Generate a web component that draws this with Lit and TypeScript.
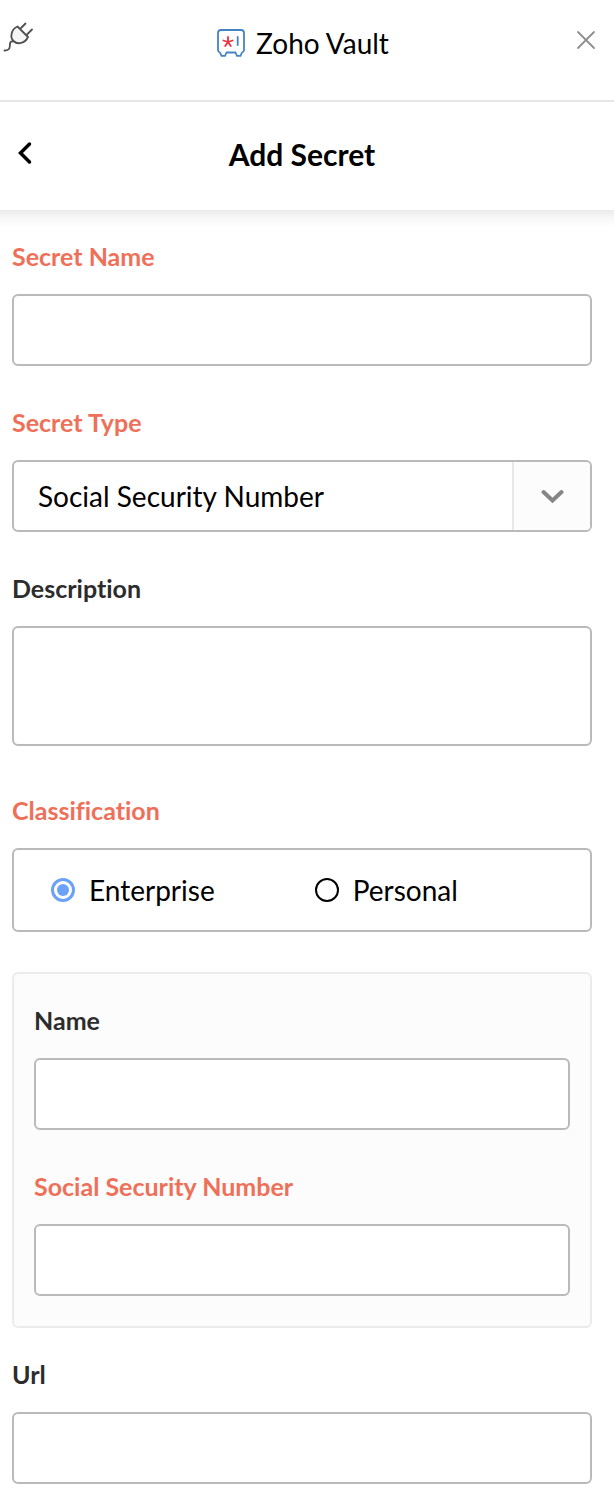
import { LitElement, html, css, svg } from "lit";
import { customElement, state } from "lit/decorators.js";

const plugIcon = svg`<svg width="34" height="34" viewBox="0 0 34 34" fill="none" stroke="#505050" stroke-width="1.800" stroke-linecap="round" stroke-linejoin="round" aria-hidden="true">
  <path d="M17.500 6.500 28 17C25 23.500 17.500 25 13.500 21C9.500 17 11.500 9 17.500 6.500Z" fill="#f6f6f6"/>
  <path d="M21 8 25.500 3.500M27 14.500 32 9.500M13 21.500C9.500 21 10 24 9.800 26.500C9.600 29.500 7.500 30.500 4.500 30.500"/>
</svg>`;

const vaultIcon = svg`<svg width="28" height="28" viewBox="0 0 28 28" fill="none" stroke-linecap="round" aria-hidden="true">
  <path d="M4 1H24Q27 1 27 4V21Q27 23 25 23.500L23.500 26.800H20L18.500 23.500H9.500L8 26.800H4.500L3 23.500Q1 23 1 21V4Q1 1 4 1Z" stroke="#4484c4" stroke-width="1.800" stroke-linejoin="round"/>
  <path d="M11 13V8M11 13 15.600 11.500M11 13 13.800 17M11 13 8.200 17M11 13 6.400 11.500" stroke="#ee3440" stroke-width="1.800"/>
  <path d="M20.700 8V16" stroke="#4484c4" stroke-width="1.800"/>
</svg>`;

@customElement("app-root")
export class AppRoot extends LitElement {
  @state() private classification = "Enterprise";

  static styles = css`
    :host {
      display: block;
      min-height: 100vh;
      box-sizing: border-box;
      background: #fff;
      color: #000;
      font-family: Lato, sans-serif;
      font-size: 28px;
      line-height: 36px;
      font-variant-ligatures: none;
    }
    * { box-sizing: border-box; }
    button {
      display: flex;
      padding: 0;
      border: 0;
      background: none;
      color: inherit;
      cursor: pointer;
    }
    svg { display: block; }
    .bar {
      display: grid;
      grid-template-columns: 1fr auto 1fr;
      padding: 20px 8px 0 0;
      height: 102px;
      border-bottom: 2px solid #e6e6e6;
      align-items: start;
    }
    .close { justify-self: end; padding: 10px 10px 0; }
    .brand {
      display: flex;
      align-items: center;
      gap: 11px;
      padding-top: 5px;
    }
    .titlebar {
      display: grid;
      grid-template-columns: 1fr auto 1fr;
      align-items: center;
      height: 108px;
      padding: 0 22px 4px 12px;
    }
    .back { justify-self: start; padding: 0 6px 2px 5px; }
    h1 { margin: 0; font-size: 30px; line-height: 36px; font-weight: 700; }
    form {
      padding: 30px 22px 8px 12px;
      background: linear-gradient(#ebebeb, #f8f8f8 8px, #fff 18px);
    }
    .field { display: flex; flex-direction: column; margin: 0 0 40px; }
    .label {
      margin: 0 0 22px;
      padding: 0;
      font-size: 25px;
      line-height: 32px;
      font-weight: 700;
      color: #2c2c2c;
    }
    .required { color: #ef7059; }
    .box {
      display: block;
      width: 100%;
      height: 72px;
      margin: 0;
      padding: 0 24px;
      border: 2px solid #bababa;
      border-radius: 6px;
      background: #fff;
      color: #000;
      font: inherit;
      outline: none;
    }
    .box:focus-visible { border-color: #6ba1f8; }
    .area { height: 120px; padding: 16px 24px; resize: none; }
    .tall { margin-bottom: 48px; }
    .pick { display: grid; }
    .pick > * { grid-area: 1 / 1; }
    .select { appearance: none; }
    .arrow {
      justify-self: end;
      display: grid;
      place-items: center;
      width: 78px;
      margin: 2px;
      border-left: 2px solid #e8e8e8;
      border-radius: 0 4px 4px 0;
      background: #fcfcfc;
      pointer-events: none;
    }
    fieldset { min-width: 0; padding: 0; border: 0; }
    .options {
      display: flex;
      align-items: center;
      gap: 100px;
      height: 84px;
      padding: 0 37px;
    }
    .option { display: flex; align-items: center; gap: 14px; cursor: pointer; }
    .radio {
      appearance: none;
      display: grid;
      place-items: center;
      width: 24px;
      height: 24px;
      margin: 0;
      border: 2px solid #000;
      border-radius: 50%;
      background: #fff;
    }
    .radio:checked { border: 3px solid #6ba1f8; }
    .radio:checked::before {
      content: "";
      width: 12px;
      height: 12px;
      border-radius: 50%;
      background: #6ba1f8;
    }
    .group {
      margin: 0 0 30px;
      padding: 30px 20px;
      border: 2px solid #ebebeb;
      border-radius: 6px;
      background: #fcfcfc;
    }
    .last { margin-bottom: 0; }
  `;

  private textField(id: string, label: string, required = false, last = false) {
    return html`<div class="field ${last ? "last" : ""}">
      <label class="label ${required ? "required" : ""}" for=${id}>${label}</label>
      <input class="box" id=${id} type="text" ?required=${required} />
    </div>`;
  }

  private option(name: string) {
    return html`<label class="option">
      <input class="radio" type="radio" name="classification" .value=${name}
        .checked=${this.classification === name}
        @change=${() => (this.classification = name)} />
      <span>${name}</span>
    </label>`;
  }

  render() {
    return html`
      <header class="bar">
        <button type="button" aria-label="Connection">${plugIcon}</button>
        <div class="brand">${vaultIcon}<span>Zoho Vault</span></div>
        <button class="close" type="button" aria-label="Close">
          <svg width="20" height="20" viewBox="0 0 20 20" stroke="#8e8e8e" stroke-width="1.800" stroke-linecap="round" aria-hidden="true"><path d="M2 2 18 18M18 2 2 18"/></svg>
        </button>
      </header>
      <div class="titlebar">
        <button class="back" type="button" aria-label="Back">
          <svg width="16" height="24" viewBox="0 0 16 24" fill="none" stroke="#000" stroke-width="3.500" stroke-linecap="round" aria-hidden="true"><path d="M12.500 3 3.500 12 12.500 21"/></svg>
        </button>
        <h1>Add Secret</h1>
      </div>
      <form @submit=${(e: Event) => e.preventDefault()}>
        ${this.textField("secret-name", "Secret Name", true)}
        <div class="field">
          <label class="label required" for="secret-type">Secret Type</label>
          <div class="pick">
            <select class="box select" id="secret-type">
              <option>Social Security Number</option>
            </select>
            <span class="arrow">
              <svg width="24" height="16" viewBox="0 0 24 16" fill="none" stroke="#868686" stroke-width="4" stroke-linecap="round" aria-hidden="true"><path d="M3.500 4 12.500 12.500 21.500 4"/></svg>
            </span>
          </div>
        </div>
        <div class="field tall">
          <label class="label" for="description">Description</label>
          <textarea class="box area" id="description"></textarea>
        </div>
        <fieldset class="field">
          <legend class="label required">Classification</legend>
          <div class="box options">${this.option("Enterprise")}${this.option("Personal")}</div>
        </fieldset>
        <div class="group">
          ${this.textField("holder-name", "Name")}
          ${this.textField("ssn", "Social Security Number", true, true)}
        </div>
        ${this.textField("url", "Url", false, true)}
      </form>
    `;
  }
}
